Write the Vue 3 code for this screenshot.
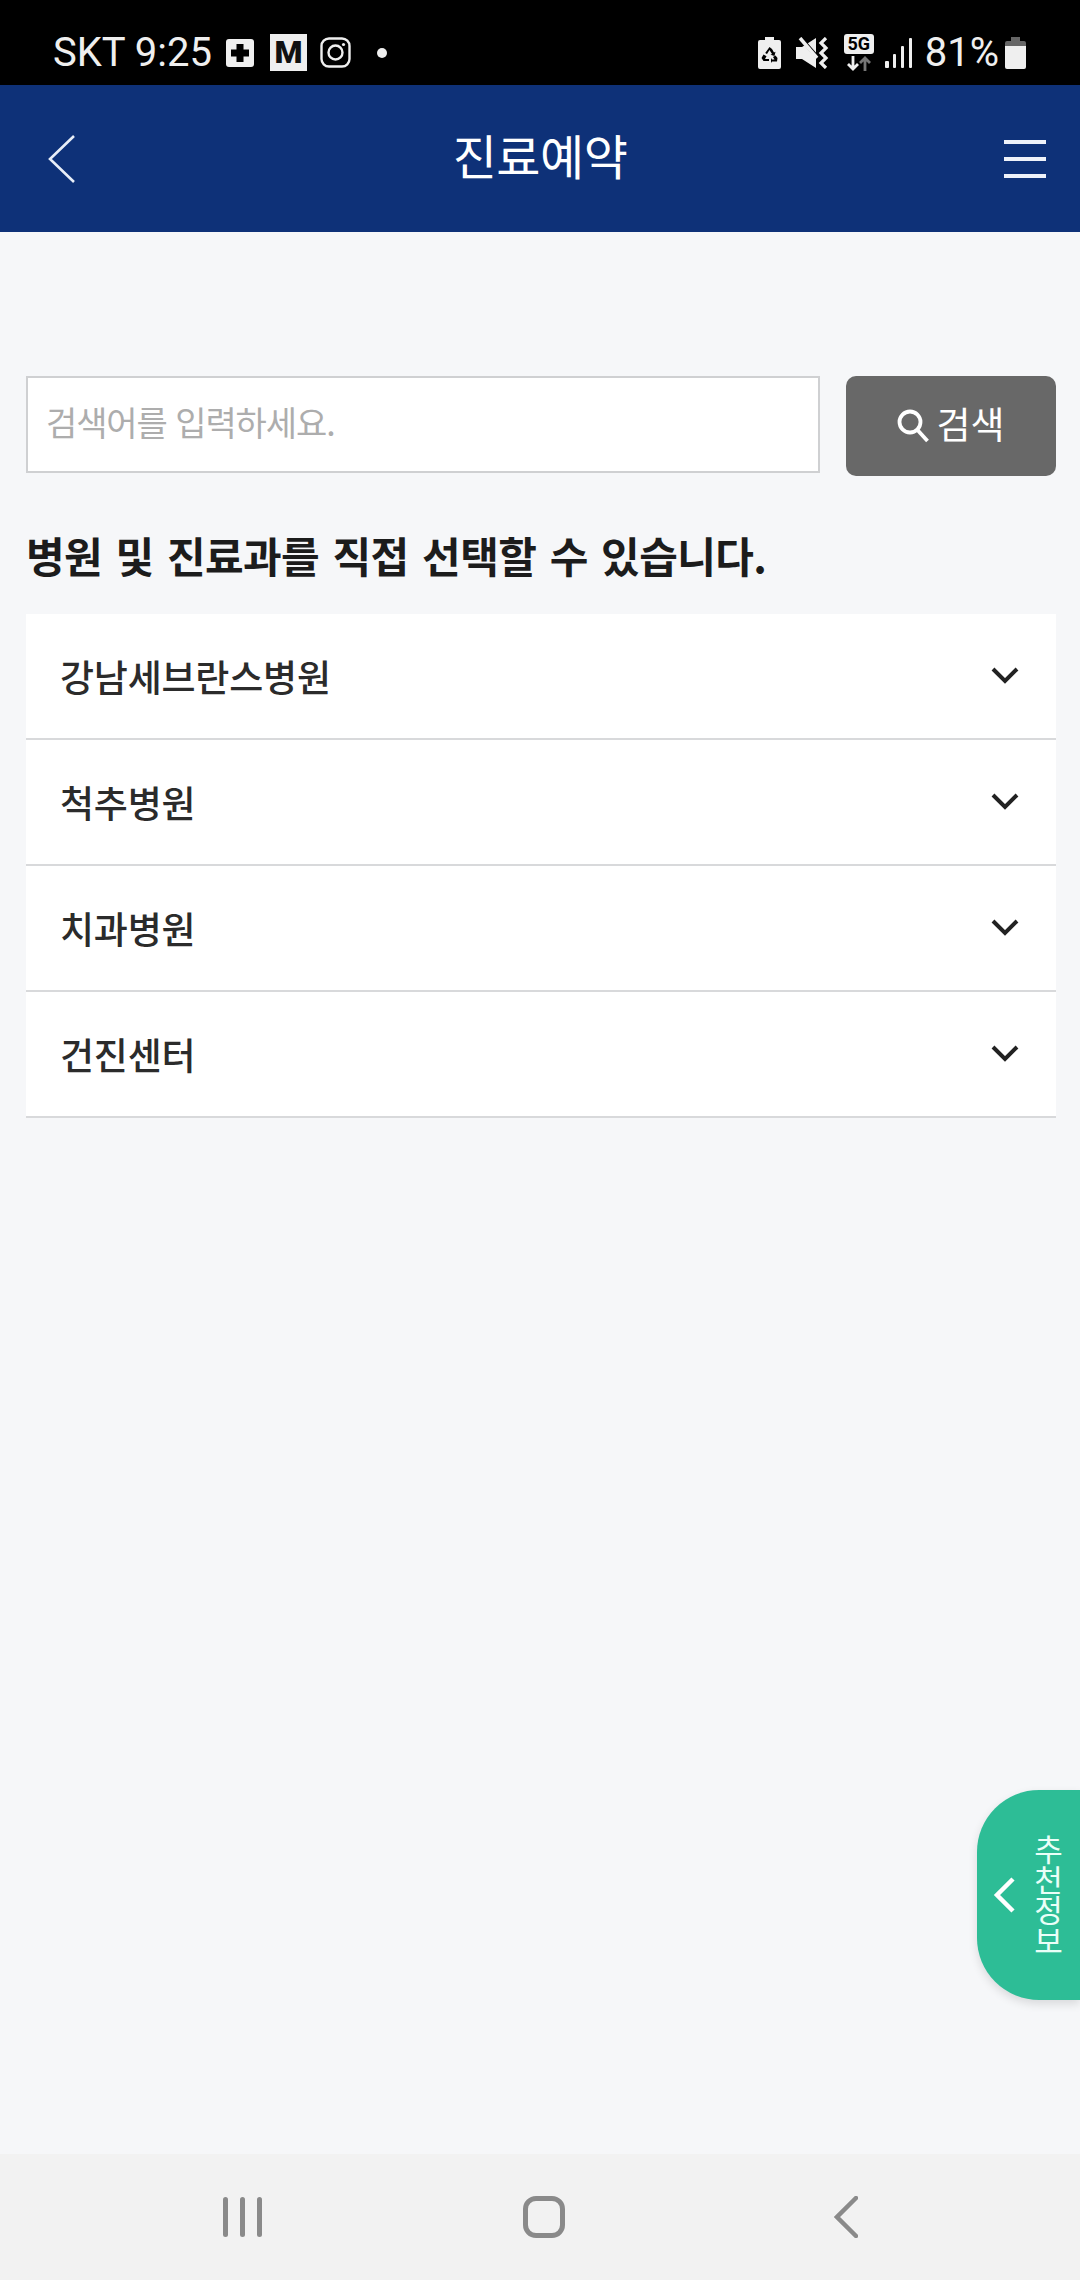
<script setup>
const hospitals = ['강남세브란스병원', '척추병원', '치과병원', '건진센터']
</script>

<template>
  <div class="page">
    <div class="status-bar">
      <div class="status-left">
        <span class="status-text">SKT 9:25</span>
        <span class="ic-plus">
          <svg width="28" height="28" viewBox="0 0 28 28"><rect width="28" height="28" rx="3" fill="#efefef" /><path d="M10.5 5h7v5.500h5.500v7h-5.500v5.500h-7v-5.500H5v-7h5.500z" fill="#000" /></svg>
        </span>
        <span class="ic-m">M</span>
        <svg class="ic-insta" width="31" height="31" viewBox="0 0 31 31" fill="none" stroke="#efefef" stroke-width="2.4">
          <rect x="1.500" y="1.500" width="28" height="28" rx="7.500" />
          <circle cx="15.500" cy="15.500" r="7" />
          <circle cx="23.500" cy="7.500" r="1.600" fill="#efefef" stroke="none" />
        </svg>
        <span class="ic-dot"></span>
      </div>
      <div class="status-right">
        <svg class="ic-saver" width="23" height="32" viewBox="0 0 23 32">
          <path d="M7 0h9v3h5a2 2 0 0 1 2 2v25a2 2 0 0 1-2 2H2a2 2 0 0 1-2-2V5a2 2 0 0 1 2-2h5z" fill="#efefef" />
          <path d="M11.500 10l2.500 2 2 3.500 1.500-.8-1 4.300-4-1.300 1.500-.8-2.500-4-2.500 4-1.800-1z" fill="#000" />
          <path d="M3.500 21l2-3.500 3 1.700-1.500 2.800h4v2H5.500zM19.500 21l-2-2.500-2.500 1.500 1.500 2.500h-2.500l-1-1.500v5l1-1.500h5z" fill="#000" />
        </svg>
        <svg class="ic-mute" width="34" height="32" viewBox="0 0 34 32">
          <path d="M0 10h6l14-9v30L6 22H0z" fill="#efefef" />
          <path d="M1 -3L23 22" stroke="#000" stroke-width="4" />
          <path d="M4 1l17 20" stroke="#efefef" stroke-width="3.500" />
          <path d="M30 1l-5 5 5 5-5 5 5 5-5 5 5 5" fill="none" stroke="#efefef" stroke-width="3.200" />
        </svg>
        <div class="net">
          <span class="net-5g">5G</span>
          <svg width="24" height="15" viewBox="0 0 24 15">
            <path d="M6 0v12M1 8l5 5 5-5" fill="none" stroke="#efefef" stroke-width="2.800" />
            <path d="M18 15V3M13 7l5-5 5 5" fill="none" stroke="#777" stroke-width="2.800" />
          </svg>
        </div>
        <svg class="ic-signal" width="28" height="30" viewBox="0 0 28 30" fill="#efefef">
          <rect x="0" y="23" width="4" height="7" rx="1" />
          <rect x="8" y="16" width="3" height="14" rx="1" />
          <rect x="16" y="8" width="3" height="22" rx="1" />
          <rect x="24" y="0" width="3" height="30" rx="1" />
        </svg>
        <span class="status-text pct">81%</span>
        <svg class="ic-battery" width="21" height="32" viewBox="0 0 21 32">
          <path d="M6 0h9v4h4a2 2 0 0 1 2 2v3H0V6a2 2 0 0 1 2-2h4z" fill="#666" />
          <path d="M0 9h21v21a2 2 0 0 1-2 2H2a2 2 0 0 1-2-2z" fill="#efefef" />
        </svg>
      </div>
    </div>

    <header class="app-header">
      <svg class="hd-back" width="28" height="48" viewBox="0 0 28 48" fill="none" stroke="#e8eef8" stroke-width="2.6">
        <path d="M26 1L2 24l24 23" />
      </svg>
      <h1 class="hd-title">진료예약</h1>
      <div class="hd-menu">
        <span></span><span></span><span></span>
      </div>
    </header>

    <main class="content">
      <div class="search-row">
        <div class="search-input">검색어를 입력하세요.</div>
        <button class="search-btn">
          <svg class="search-icon" width="34" height="36" viewBox="0 0 34 36" fill="none" stroke="#fff" stroke-width="3.800">
            <circle cx="13" cy="13" r="10.500" />
            <path d="M20.500 21l10 11" />
          </svg>
          <span>검색</span>
        </button>
      </div>
      <h2 class="guide">병원 및 진료과를 직접 선택할 수 있습니다.</h2>
      <ul class="hospital-list">
        <li v-for="h in hospitals" :key="h" class="hospital-item">
          <span>{{ h }}</span>
          <svg width="28" height="18" viewBox="0 0 28 18" fill="none" stroke="#222" stroke-width="4">
            <path d="M2 2l12 12L26 2" />
          </svg>
        </li>
      </ul>
    </main>

    <div class="side-tab">
      <svg width="22" height="36" viewBox="0 0 22 36" fill="none" stroke="#fff" stroke-width="4.500">
        <path d="M20 2L4 18l16 16" />
      </svg>
      <span class="side-label">추천정보</span>
    </div>

    <nav class="nav-bar">
      <div class="nav-recent"><span></span><span></span><span></span></div>
      <div class="nav-home"></div>
      <svg width="24" height="42" viewBox="0 0 24 42" fill="none" stroke="#8a8a8a" stroke-width="4.500" stroke-linecap="round">
        <path d="M22 2L3 21l19 19" />
      </svg>
    </nav>
  </div>
</template>

<style>
body {
  margin: 0;
}
</style>

<style scoped>
.page {
  position: relative;
  width: 1080px;
  height: 2280px;
  display: flex;
  flex-direction: column;
  background: #f6f7f9;
  font-family: "Noto Sans CJK KR", "Noto Sans", sans-serif;
  overflow: hidden;
}

.status-bar {
  height: 85px;
  background: #000;
  display: flex;
  justify-content: space-between;
  align-items: center;
  padding: 0 54px 0 53px;
  box-sizing: border-box;
  flex-shrink: 0;
}

.status-left,
.status-right {
  display: flex;
  align-items: center;
  height: 40px;
  margin-top: 20px;
}

.status-text {
  font-family: Roboto, sans-serif;
  font-size: 40px;
  color: #efefef;
  line-height: 40px;
}

.ic-plus {
  display: flex;
  margin-left: 14px;
}

.ic-m {
  width: 37px;
  height: 37px;
  margin-left: 16px;
  background: #efefef;
  color: #111;
  font-family: Roboto, sans-serif;
  font-weight: 900;
  font-size: 32px;
  line-height: 37px;
  text-align: center;
}

.ic-insta {
  margin-left: 13px;
}

.ic-dot {
  width: 10px;
  height: 10px;
  border-radius: 50%;
  background: #efefef;
  margin-left: 26px;
}

.ic-mute {
  margin-left: 15px;
}

.net {
  margin-left: 14px;
  display: flex;
  flex-direction: column;
  align-items: center;
  gap: 2px;
}

.net-5g {
  width: 30px;
  height: 20px;
  border-radius: 3px;
  background: #efefef;
  color: #000;
  font-family: Roboto, sans-serif;
  font-weight: 700;
  font-size: 18px;
  line-height: 20px;
  text-align: center;
}

.ic-signal {
  margin-left: 11px;
}

.pct {
  margin-left: 12px;
}

.ic-battery {
  margin-left: 6px;
}

.app-header {
  height: 147px;
  background: #0e3178;
  display: flex;
  justify-content: space-between;
  align-items: center;
  padding: 0 34px 0 48px;
  flex-shrink: 0;
}

.hd-title {
  margin: 0 0 10px;
  font-size: 48px;
  font-weight: 400;
  color: #fff;
  line-height: 1;
  letter-spacing: -0.5px;
}

.hd-menu {
  width: 42px;
  display: flex;
  flex-direction: column;
  gap: 13px;
}

.hd-menu span {
  height: 4px;
  background: #eef2fa;
}

.content {
  flex: 1;
  padding: 144px 24px 0 26px;
}

.search-row {
  display: flex;
  gap: 26px;
  align-items: flex-start;
}

.search-input {
  flex: 1;
  height: 97px;
  box-sizing: border-box;
  background: #fff;
  border: 2px solid #cfd0d2;
  padding: 0 18px;
  font-size: 34px;
  line-height: 88px;
  letter-spacing: -1.100px;
  word-spacing: 2px;
  color: #adadad;
}

.search-btn {
  width: 210px;
  height: 100px;
  border: none;
  border-radius: 10px;
  background: #686868;
  color: #fff;
  display: flex;
  align-items: center;
  justify-content: center;
  gap: 5px;
  font-family: inherit;
  font-size: 37px;
  padding: 0 0 6px;
}

.search-icon {
  margin-top: 8px;
}

.guide {
  margin: 49px 0 0;
  font-size: 42px;
  font-weight: 700;
  color: #1c1c1c;
  line-height: 60px;
  letter-spacing: -0.6px;
  word-spacing: 4.500px;
}

.hospital-list {
  list-style: none;
  margin: 29px 0 0;
  padding: 0;
}

.hospital-item {
  height: 126px;
  box-sizing: border-box;
  background: #fff;
  border-bottom: 2px solid #d8d9db;
  display: flex;
  justify-content: space-between;
  align-items: center;
  padding: 0 37px 0 34px;
  font-size: 37px;
  font-weight: 500;
  letter-spacing: -0.2px;
  color: #2b2b2b;
}

.side-tab {
  position: absolute;
  right: 0;
  top: 1790px;
  width: 103px;
  height: 210px;
  box-sizing: border-box;
  background: #2dbd96;
  border-radius: 62px 0 0 62px;
  box-shadow: 0 4px 10px rgba(0, 0, 0, 0.12);
  display: flex;
  align-items: center;
  padding-left: 16px;
  gap: 18px;
}

.side-label {
  writing-mode: vertical-rl;
  text-orientation: upright;
  font-size: 31px;
  line-height: 31px;
  letter-spacing: -0.5px;
  color: #eafff8;
}

.nav-bar {
  height: 126px;
  background: #f2f2f2;
  flex-shrink: 0;
  display: grid;
  grid-template-columns: repeat(3, 302px);
  justify-content: center;
  align-items: center;
  justify-items: center;
  padding-left: 8px;
}

.nav-recent {
  display: flex;
  gap: 12px;
}

.nav-recent span {
  width: 5px;
  height: 40px;
  border-radius: 3px;
  background: #8a8a8a;
}

.nav-home {
  width: 42px;
  height: 42px;
  box-sizing: border-box;
  border: 5px solid #8a8a8a;
  border-radius: 13px;
}
</style>
